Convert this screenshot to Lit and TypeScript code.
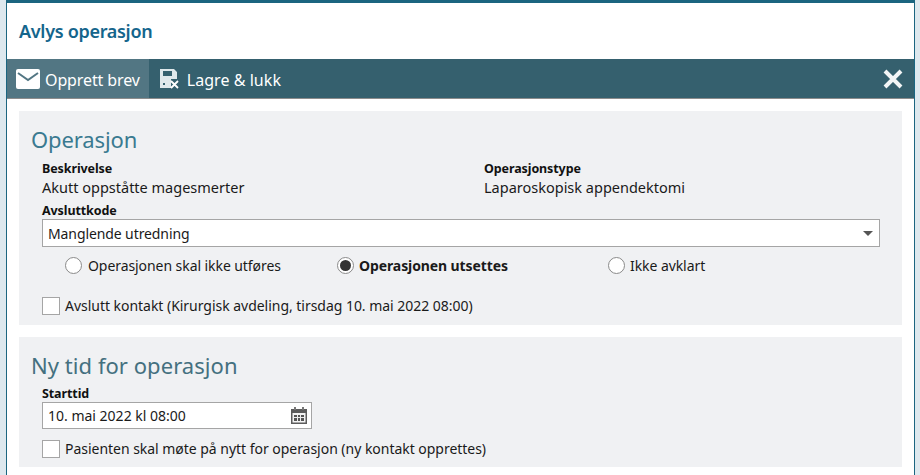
import { html, css, LitElement } from 'lit';
import { customElement } from 'lit/decorators.js';

@customElement('app-root')
export class AppRoot extends LitElement {
  static styles = css`
    :host {
      display: block;
      width: 920px;
      height: 475px;
      overflow: hidden;
      background: #dde8ee;
      font-family: 'Noto Sans', 'Open Sans', sans-serif;
      font-size: 14px;
      color: #1a1a1a;
    }
    .window {
      box-sizing: border-box;
      margin-left: 6px;
      width: 909px;
      height: 475px;
      background: #fff;
      border-left: 1px solid #1b6580;
      border-right: 1px solid #1b6580;
      border-top: 3px solid #1b6580;
      overflow: hidden;
    }
    .title {
      height: 55px;
      display: flex;
      align-items: center;
      padding-left: 12px;
      font-size: 18px;
      font-weight: 600;
      color: #14658c;
      letter-spacing: -0.3px;
      margin-bottom: 1px;
    }
    .toolbar {
      height: 39px;
      display: flex;
      align-items: stretch;
      background: #35606e;
      border-bottom: 1px solid #8c8c8c;
      color: #fff;
      font-size: 16px;
      letter-spacing: -0.12px;
    }
    .tool {
      display: flex;
      align-items: center;
      gap: 5px;
      padding: 0 9px 0 9px;
    }
    .tool span {
      padding-top: 2px;
    }
    .tool.active {
      background: #527683;
    }
    .tool.save {
      padding-left: 11px;
      gap: 7px;
      letter-spacing: 0.05px;
    }
    .close {
      margin-left: auto;
      padding-right: 11px;
      display: flex;
      align-items: center;
    }
    .content {
      padding: 12px 12px 0 12px;
      display: flex;
      flex-direction: column;
      gap: 12px;
    }
    .panel {
      background: #f0f1f3;
      padding: 13px 23px 0 12px;
    }
    .panel.first {
      height: 201px;
    }
    .panel.second {
      height: 117px;
    }
    h2 {
      margin: 0;
      font-size: 22px;
      line-height: 30px;
      font-weight: 400;
      color: #3a7a90;
      letter-spacing: -0.1px;
    }
    .second h2 {
      color: #44707f;
      letter-spacing: 0.05px;
    }
    .fields {
      display: grid;
      grid-template-columns: 442px 1fr;
      padding-left: 11px;
      margin-top: 7px;
    }
    .label {
      font-size: 12.5px;
      line-height: 16px;
      font-weight: 700;
      color: #111;
      letter-spacing: -0.1px;
    }
    .value {
      font-size: 14.5px;
      line-height: 20px;
    }
    .block {
      padding-left: 11px;
      margin-top: 6px;
    }
    .select {
      box-sizing: border-box;
      height: 28px;
      display: flex;
      align-items: center;
      justify-content: space-between;
      margin-right: -1px;
      padding: 0 6px 0 5px;
      background: #fff;
      border: 1px solid #a5a5a5;
      letter-spacing: -0.1px;
    }
    .caret {
      width: 0;
      height: 0;
      border-left: 5px solid transparent;
      border-right: 5px solid transparent;
      border-top: 5px solid #555;
    }
    .radios {
      height: 37px;
      display: flex;
      align-items: center;
      padding-left: 23px;
      letter-spacing: -0.07px;
    }
    .radio {
      display: flex;
      align-items: center;
      gap: 5px;
    }
    .radio.r1 { width: 272px; gap: 6px; }
    .radio.r2 { width: 271px; font-weight: 700; letter-spacing: -0.1px; }
    .dot {
      box-sizing: border-box;
      width: 17px;
      height: 17px;
      border-radius: 50%;
      border: 1px solid #8a8a8a;
      background: #fff;
      display: flex;
      align-items: center;
      justify-content: center;
    }
    .dot i {
      width: 11px;
      height: 11px;
      border-radius: 50%;
      background: #333;
    }
    .check {
      display: flex;
      align-items: center;
      gap: 5px;
      padding-left: 11px;
      letter-spacing: -0.03px;
    }
    .box {
      box-sizing: border-box;
      width: 18px;
      height: 18px;
      background: #fff;
      border: 1px solid #a5a5a5;
    }
    .first .check {
      margin-top: 12px;
    }
    .date {
      box-sizing: border-box;
      width: 270px;
      height: 27px;
      display: flex;
      align-items: center;
      justify-content: space-between;
      padding: 0 4px 0 5px;
      background: #fff;
      border: 1px solid #a5a5a5;
    }
    .second .check {
      margin-top: 10px;
    }
  `;

  render() {
    return html`
      <div class="window">
        <div class="title">Avlys operasjon</div>
        <div class="toolbar">
          <div class="tool active">
            <svg width="24" height="20" viewBox="0 0 24 20">
              <rect width="24" height="20" rx="2" fill="#fff" />
              <path d="M2 4l10 7 10-7" fill="none" stroke="#527683" stroke-width="2" />
            </svg>
            <span>Opprett brev</span>
          </div>
          <div class="tool save">
            <svg width="20" height="20" viewBox="0 0 20 20">
              <path d="M0 0h14l3 3v7h-6v9H0z" fill="#dfe8eb" />
              <path d="M3 2h9v5H3z" fill="#35606e" />
              <path d="M3 14h2v2H3z" fill="#35606e" />
              <path d="M11 12l7 7M18 12l-7 7" stroke="#fff" stroke-width="1.8" />
            </svg>
            <span>Lagre &amp; lukk</span>
          </div>
          <div class="close">
            <svg width="20" height="20" viewBox="0 0 20 20">
              <path d="M2 2l16 16M18 2L2 18" stroke="#f2f5f6" stroke-width="4" />
            </svg>
          </div>
        </div>
        <div class="content">
          <section class="panel first">
            <h2>Operasjon</h2>
            <div class="fields">
              <div>
                <div class="label">Beskrivelse</div>
                <div class="value">Akutt oppståtte magesmerter</div>
              </div>
              <div>
                <div class="label">Operasjonstype</div>
                <div class="value">Laparoskopisk appendektomi</div>
              </div>
            </div>
            <div class="block">
              <div class="label">Avsluttkode</div>
              <div class="select"><span>Manglende utredning</span><span class="caret"></span></div>
              <div class="radios">
                <div class="radio r1"><span class="dot"></span>Operasjonen skal ikke utføres</div>
                <div class="radio r2"><span class="dot"><i></i></span>Operasjonen utsettes</div>
                <div class="radio"><span class="dot"></span>Ikke avklart</div>
              </div>
            </div>
            <div class="check"><span class="box"></span>Avslutt kontakt (Kirurgisk avdeling, tirsdag 10. mai 2022 08:00)</div>
          </section>
          <section class="panel second">
            <h2>Ny tid for operasjon</h2>
            <div class="block">
              <div class="label">Starttid</div>
              <div class="date">
                <span>10. mai 2022 kl 08:00</span>
                <svg width="16" height="17" viewBox="0 0 16 17">
                  <path d="M0 2h16v15H0z" fill="#5c5c5c" />
                  <path d="M1.5 6h13v9.500h-13z" fill="#f4f4f4" />
                  <path d="M3 0h2v3H3zM11 0h2v3h-2z" fill="#777" />
                  <path d="M3 8h10v6H3z" fill="#555" />
                  <path d="M3 10h10v1H3zM6 8h1v6H6zM9 8h1v6H9z" fill="#eee" />
                </svg>
              </div>
            </div>
            <div class="check"><span class="box"></span>Pasienten skal møte på nytt for operasjon (ny kontakt opprettes)</div>
          </section>
        </div>
      </div>
    `;
  }
}
